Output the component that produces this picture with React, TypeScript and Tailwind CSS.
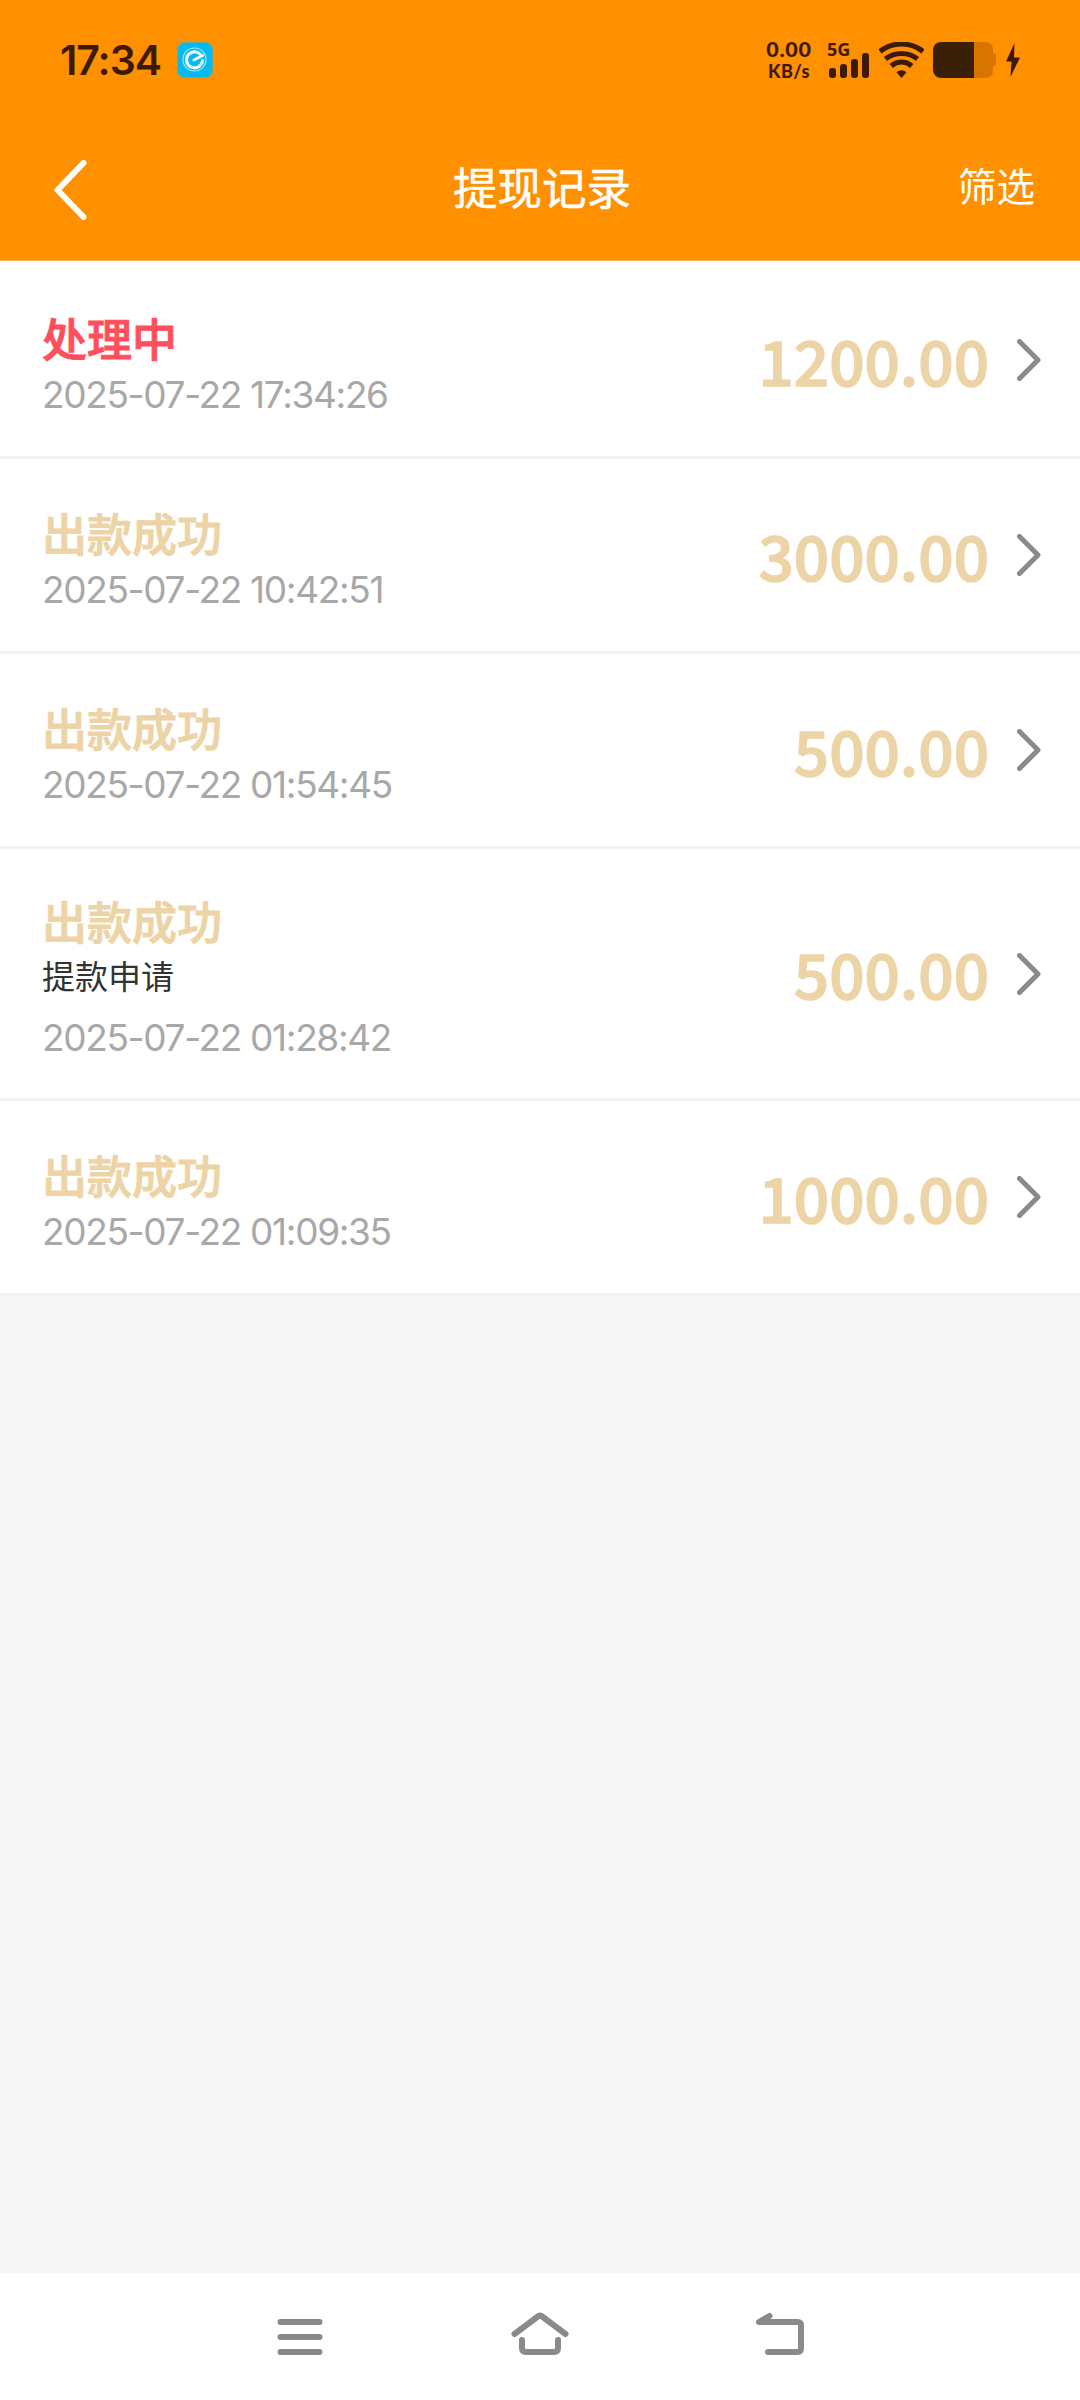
import React from 'react';

type Status = 'processing' | 'success';

interface WithdrawRecord {
  id: number;
  status: Status;
  remark?: string;
  time: string;
  amount: number;
}

const records: WithdrawRecord[] = [
  { id: 1, status: 'processing', time: '2025-07-22 17:34:26', amount: 1200 },
  { id: 2, status: 'success', time: '2025-07-22 10:42:51', amount: 3000 },
  { id: 3, status: 'success', time: '2025-07-22 01:54:45', amount: 500 },
  { id: 4, status: 'success', remark: '提款申请', time: '2025-07-22 01:28:42', amount: 500 },
  { id: 5, status: 'success', time: '2025-07-22 01:09:35', amount: 1000 },
];

const statusText: Record<Status, string> = {
  processing: '处理中',
  success: '出款成功',
};

const StatusBar: React.FC = () => (
  <div className="flex h-[120px] items-center justify-between pl-[60px] pr-[59px] text-[#3d1a05]">
    <div className="flex items-center">
      <span className="w-[117px] font-['Inter',sans-serif] text-[41px] font-semibold leading-none tracking-[-1px]">17:34</span>
      <svg className="h-9 w-9" viewBox="0 0 36 36" fill="none">
        <rect x="0.5" y="0.5" width="35" height="35" rx="7" fill="#06b9ef" stroke="#6aa9a0" />
        <circle cx="17.5" cy="17.5" r="11.5" stroke="#a5e8fb" strokeWidth="1.2" />
        <path d="M17 18l8.5-4.500M25.500 18.500a8 8 0 1 1-2.500-6.500" stroke="#f0fcff" strokeWidth="3" strokeLinecap="round" />
      </svg>
    </div>

    <div className="flex items-center">
      <div className="flex w-[48px] flex-col items-center gap-[4px] font-['Lato',sans-serif] font-black">
        <span className="text-[21.5px] leading-[18px] tracking-[0.7px]">0.00</span>
        <span className="text-[18px] leading-[18px] tracking-[0.5px]">KB/s</span>
      </div>
      <div className="ml-[14px] flex h-9 w-[43px] flex-col justify-between">
        <span className="font-['Noto_Sans',sans-serif] text-[18px] font-bold leading-[14px]">5G</span>
        <div className="-mt-1 flex items-end gap-1 pl-0.5">
          <i className="h-[10px] w-[7px] rounded-[3px] bg-current" />
          <i className="h-[14px] w-[7px] rounded-[3px] bg-current" />
          <i className="h-[19px] w-[7px] rounded-[3px] bg-current" />
          <i className="h-[25px] w-[7px] rounded-[3px] bg-current" />
        </div>
      </div>
      <svg className="ml-[9px] h-9 w-[45px]" viewBox="0 0 45 36" fill="none" stroke="currentColor" strokeWidth="5">
        <path d="M1 9.500C13-0.500 32-0.500 44 9.500" />
        <path d="M6.500 17C15.500 9.500 29.500 9.500 38.500 17" />
        <path d="M12.200 24C18.500 18.800 26.500 18.800 32.800 24" />
        <path d="M17.500 30.300Q22.500 26.200 27.500 30.300L22.500 36z" fill="currentColor" stroke="none" />
      </svg>
      <svg className="ml-[9px] h-9 w-[63px]" viewBox="0 0 63 36">
        <path d="M41 0h12a7 7 0 0 1 7 7v4h1q2 0 2 2v9q0 2-2 2h-1v5a7 7 0 0 1-7 7H41z" fill="#d97400" />
        <path d="M8 0h33v36H8a8 8 0 0 1-8-8V8a8 8 0 0 1 8-8z" fill="#3a2006" />
      </svg>
      <svg className="ml-[9px] h-[34px] w-4" viewBox="0 0 16 34">
        <path d="M9.500 0L1 18.500h5.500L5.500 34 15 14.500H9z" fill="currentColor" />
      </svg>
    </div>
  </div>
);

const Header: React.FC = () => (
  <div className="grid h-[140px] grid-cols-3 items-center px-[45px] font-['Noto_Sans_CJK_SC',sans-serif] text-white">
    <svg className="ml-[8px] h-[62px] w-[34px]" viewBox="0 0 34 62" fill="none" stroke="currentColor" strokeWidth="6" strokeLinecap="round" strokeLinejoin="round">
      <path d="M30.500 4L4.500 31l26 27" />
    </svg>
    <h1 className="-mt-[7px] pl-[4px] text-center text-[44.5px] leading-none [-webkit-text-stroke:0.5px_white]">提现记录</h1>
    <button className="-mt-[11px] text-right text-[38.5px] leading-none">筛选</button>
  </div>
);

const RecordRow: React.FC<{ record: WithdrawRecord }> = ({ record }) => (
  <div
    className={`flex items-center justify-between border-b-[3px] border-[#f3f3f3] bg-white pl-[42px] pr-[39px] ${
      record.remark ? 'h-[252px]' : 'h-[195px]'
    }`}
  >
    <div className={`flex flex-col self-start ${record.remark ? 'pt-[49px]' : 'pt-[51px]'}`}>
      <span
        className={`font-['Noto_Sans_CJK_SC',sans-serif] text-[45px] font-medium leading-none [-webkit-text-stroke:1px_currentColor] ${
          record.status === 'processing' ? 'text-[#ff4f5c]' : 'text-[#edd4a6]'
        }`}
      >
        {statusText[record.status]}
      </span>
      {record.remark && (
        <span className="mt-[16px] font-['Noto_Sans_CJK_SC',sans-serif] text-[33px] leading-[33px] text-[#333333]">{record.remark}</span>
      )}
      <span
        className={`font-['Inter',sans-serif] text-[37px] leading-[36px] tracking-[-1.34px] text-[#a8a8a8] ${
          record.remark ? 'mt-[28px]' : 'mt-[17px]'
        }`}
      >
        {record.time}
      </span>
    </div>
    <div className="flex items-center">
      <span className="-mt-[3px] font-['Noto_Sans_CJK_SC',sans-serif] text-[62px] font-medium leading-[60px] text-[#edd4a6] [-webkit-text-stroke:1.5px_currentColor]">
        {record.amount.toFixed(2)}
      </span>
      <svg className="ml-[28px] h-[42px] w-6" viewBox="0 0 24 42" fill="none" stroke="#8a8a8a" strokeWidth="5" strokeLinecap="round" strokeLinejoin="round">
        <path d="M2.500 2.500L21 21 2.500 39.500" />
      </svg>
    </div>
  </div>
);

const NavBar: React.FC = () => (
  <div className="h-[126px] bg-white">
    <div className="mx-auto grid h-full w-[720px] grid-cols-3 place-items-center text-[#8a8a8a]">
      <svg className="h-[60px] w-[60px]" viewBox="0 0 60 60" fill="none" stroke="currentColor" strokeWidth="6" strokeLinecap="round">
        <path d="M10.500 15h39M10.500 30h39M10.500 45h39" />
      </svg>
      <svg className="h-[60px] w-[60px]" viewBox="0 0 60 60" fill="none" stroke="currentColor" strokeWidth="6" strokeLinecap="round" strokeLinejoin="round">
        <path d="M4.500 27L28.500 9q1.500-1 3 0l24 18" />
        <path d="M12 33v8q0 4 4 4h28q4 0 4-4v-8" />
      </svg>
      <svg className="h-[60px] w-[60px]" viewBox="0 0 60 60" fill="none" stroke="currentColor" strokeWidth="6" strokeLinecap="round" strokeLinejoin="round">
        <path d="M19.500 9L9 15h38.500q3.500 0 3.500 3.500v23q0 3.500-3.500 3.500H18" />
      </svg>
    </div>
  </div>
);

const App: React.FC = () => (
  <div className="flex h-[2400px] w-[1080px] flex-col bg-[#f6f6f6]">
    <header className="bg-[#ff9000]">
      <StatusBar />
      <Header />
    </header>
    <main className="flex-1">
      <div className="border-t border-[#f3a85c] bg-white pt-[3px]">
        {records.map(record => (
          <RecordRow key={record.id} record={record} />
        ))}
      </div>
    </main>
    <NavBar />
  </div>
);

export default App;
